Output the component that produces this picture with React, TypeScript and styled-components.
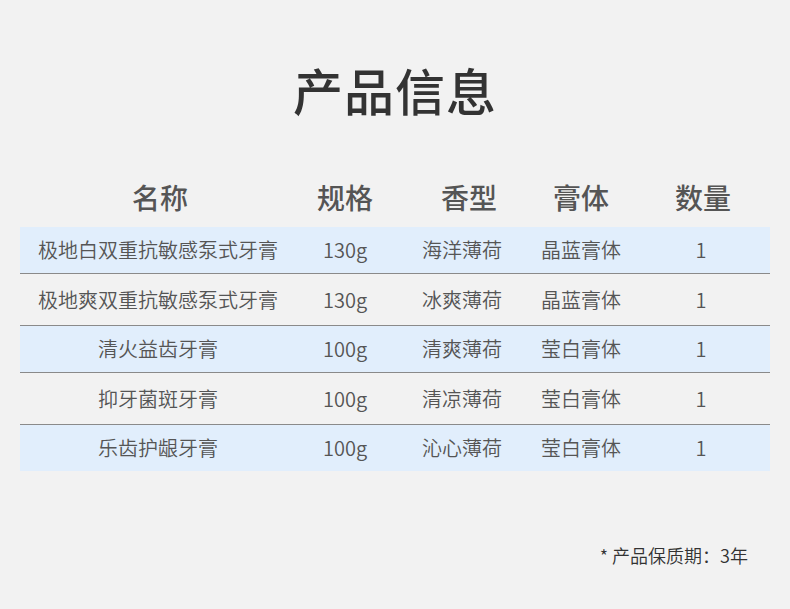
import React from 'react';
import styled, { createGlobalStyle } from 'styled-components';

const GlobalStyle = createGlobalStyle`
  html, body {
    margin: 0;
    padding: 0;
    background-color: #f2f2f2;
  }

  body {
    font-family: 'Noto Sans CJK SC', 'Noto Sans', sans-serif;
  }
`;

const Wrap = styled.div`
  width: 790px;
  height: 609px;
  padding: 64px 20px 0 20px;
  box-sizing: border-box;
  display: flex;
  flex-direction: column;
  overflow: hidden;
`;

const Title = styled.h1`
  margin: 0;
  font-size: 50px;
  line-height: 50px;
  font-weight: 500;
  color: #333333;
  text-align: center;
  letter-spacing: 1px;
`;

const Table = styled.div`
  margin-top: 63px;
  display: flex;
  flex-direction: column;
`;

const Grid = styled.div`
  display: grid;
  grid-template-columns: 276px 98px 136px 102px 138px;
  align-items: center;
`;

const HeaderRow = styled(Grid)`
  height: 40px;
  margin-bottom: 10px;
`;

const HeaderCell = styled.div<{ $shift?: number }>`
  text-align: center;
  font-size: 28px;
  line-height: 40px;
  font-weight: 500;
  color: #555555;
  padding-left: ${({ $shift }) => ($shift ? `${$shift}px` : '0')};
`;

const Row = styled(Grid)<{ $striped: boolean; $last: boolean }>`
  height: ${({ $striped }) => ($striped ? '46px' : '51px')};
  background-color: ${({ $striped }) => ($striped ? '#e1eefc' : 'transparent')};
  border-bottom: ${({ $last }) => ($last ? 'none' : '1px solid #8a8a8a')};
`;

const Cell = styled.div`
  text-align: center;
  font-size: 20px;
  line-height: 24px;
  font-weight: 350;
  color: #555555;
  white-space: nowrap;
`;

const Footer = styled.div`
  margin-top: 72px;
  padding-right: 22px;
  text-align: right;
  font-size: 18px;
  line-height: 24px;
  font-weight: 350;
  color: #333333;
`;

const headers = ['名称', '规格', '香型', '膏体', '数量'];

const products = [
  { name: '极地白双重抗敏感泵式牙膏', size: '130g', flavor: '海洋薄荷', paste: '晶蓝膏体', qty: 1 },
  { name: '极地爽双重抗敏感泵式牙膏', size: '130g', flavor: '冰爽薄荷', paste: '晶蓝膏体', qty: 1 },
  { name: '清火益齿牙膏', size: '100g', flavor: '清爽薄荷', paste: '莹白膏体', qty: 1 },
  { name: '抑牙菌斑牙膏', size: '100g', flavor: '清凉薄荷', paste: '莹白膏体', qty: 1 },
  { name: '乐齿护龈牙膏', size: '100g', flavor: '沁心薄荷', paste: '莹白膏体', qty: 1 },
];

const App = () => {
  return (
    <>
      <GlobalStyle />
      <Wrap>
        <Title>产品信息</Title>
        <Table>
          <HeaderRow>
            {headers.map((h, i) => (
              <HeaderCell key={h} $shift={i === 0 ? 4 : i === 2 ? 14 : i === 4 ? 4 : 0}>
                {h}
              </HeaderCell>
            ))}
          </HeaderRow>
          {products.map((p, i) => (
            <Row key={p.name} $striped={i % 2 === 0} $last={i === products.length - 1}>
              <Cell>{p.name}</Cell>
              <Cell>{p.size}</Cell>
              <Cell>{p.flavor}</Cell>
              <Cell>{p.paste}</Cell>
              <Cell>{p.qty}</Cell>
            </Row>
          ))}
        </Table>
        <Footer>* 产品保质期：3年</Footer>
      </Wrap>
    </>
  );
};

export default App;
